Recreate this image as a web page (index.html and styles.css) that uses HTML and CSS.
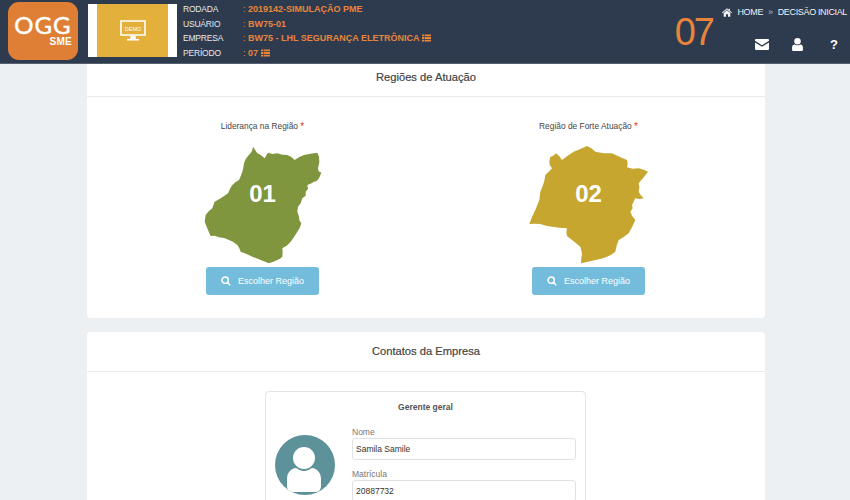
FILE: index.html
```html
<!DOCTYPE html>
<html lang="pt">

<head>
    <meta charset="UTF-8">
    <meta name="viewport" content="width=device-width, initial-scale=1.0">
    <title>Regiões de Atuação</title>
    <link rel="stylesheet" href="styles.css">
</head>

<body>
    <header class="topbar">
        <div class="logo">
            <span class="logo-name">OGG</span>
            <span class="logo-sub">SME</span>
        </div>
        <div class="demo">
            <div class="demo-inner">
                <svg class="demo-icon" viewBox="0 0 26 21">
                    <path d="M1 1h24v14H1z" fill="none" stroke="#fff" stroke-width="1.600"/>
                    <path d="M10.500 16h5l.5 3h-6zM7 19h12v1.500H7z" fill="#fff"/>
                    <text x="13" y="10.500" class="demo-text">DEMO</text>
                </svg>
            </div>
        </div>
        <dl class="info">
            <dt>RODADA</dt>
            <dd>: <b>2019142-SIMULAÇÃO PME</b></dd>
            <dt>USUÁRIO</dt>
            <dd>: <b>BW75-01</b></dd>
            <dt>EMPRESA</dt>
            <dd>: <b>BW75 - LHL SEGURANÇA ELETRÔNICA</b>
                <svg class="list-icon" viewBox="0 0 10 8"><path d="M0 0h2.400v2H0zM3 0h7v2H3zM0 3h2.400v2H0zM3 3h7v2H3zM0 6h2.400v2H0zM3 6h7v2H3z"/></svg>
            </dd>
            <dt>PERÍODO</dt>
            <dd>: <b>07</b>
                <svg class="list-icon" viewBox="0 0 10 8"><path d="M0 0h2.400v2H0zM3 0h7v2H3zM0 3h2.400v2H0zM3 3h7v2H3zM0 6h2.400v2H0zM3 6h7v2H3z"/></svg>
            </dd>
        </dl>
        <div class="period">07</div>
        <div class="top-right">
            <div class="crumbs">
                <svg class="home-icon" viewBox="0 0 12 10"><path d="M6 0l2 1.700V.6h1.500v2.400L12 5.100l-.6.7L6 1.300.6 5.800 0 5.100zM6 2.300l4 3.300V10H7.200V7H4.800v3H2V5.600z"/></svg>
                <span>HOME</span>
                <span class="crumb-sep">»</span>
                <span>DECISÃO INICIAL</span>
            </div>
            <div class="actions">
                <svg class="mail-icon" viewBox="0 0 14 11"><path d="M1 0h12a1 1 0 0 1 1 1v.8L7 6.300 0 1.800V1a1 1 0 0 1 1-1zM0 3.400l7 4.400 7-4.400V10a1 1 0 0 1-1 1H1a1 1 0 0 1-1-1z"/></svg>
                <svg class="user-icon" viewBox="0 0 10 12"><circle cx="5" cy="3" r="3"/><path d="M0 11V8.500C0 7 1.200 6 2.500 6c.7.500 1.500.8 2.500.8S6.800 6.500 7.500 6C8.800 6 10 7 10 8.500V11a1 1 0 0 1-1 1H1a1 1 0 0 1-1-1z"/></svg>
                <span class="help">?</span>
            </div>
        </div>
    </header>

    <main class="content">
        <section class="card card-regions">
            <h2 class="card-title title-regions">Regiões de Atuação</h2>
            <div class="regions">
                <div class="region">
                    <div class="field-label">Liderança na Região <span class="req">*</span></div>
                    <div class="map">
                        <svg viewBox="-8 0 450 360">
                            <polygon fill="#7f963f" points="187,5 184,17 180,24 170,35 164,44 160,55 158,68 155,80 150,94 145,105 134,112 125,120 118,131 112,145 100,153 90,160 72,170 68,181 65,190 54,199 45,210 42,230 47,243 52,255 60,273 72,272 85,277 100,279 115,285 128,291 140,300 146,310 150,320 166,326 185,335 210,345 235,355 248,350 260,345 268,341 275,335 276,322 275,310 288,302 300,290 310,276 320,260 327,249 332,235 326,226 325,215 320,200 322,185 330,175 335,160 345,152 345,140 352,132 350,120 360,116 370,110 378,108 385,100 392,83 384,79 382,70 386,52 385,35 380,23 360,26 340,30 326,36 312,45 302,36 290,30 275,29 260,25 245,27 232,23 226,32 222,40 210,30 200,25"/>
                        </svg>
                        <span class="map-num">01</span>
                    </div>
                    <button class="btn-region">
                        <svg class="search-icon" viewBox="0 0 12 12"><circle cx="5" cy="5" r="3.800"/><path d="M7.800 7.800L11 11"/></svg>
                        Escolher Região
                    </button>
                </div>
                <div class="region">
                    <div class="field-label">Região de Forte Atuação <span class="req">*</span></div>
                    <div class="map">
                        <svg viewBox="-4 0 450 360">
                            <polygon fill="#c6a62f" points="105,35 102,48 103,60 110,70 100,80 90,90 88,103 85,115 80,128 75,140 72,165 66,180 60,195 50,216 42,237 58,236 75,237 92,242 110,245 132,248 155,250 153,262 155,273 175,289 195,305 200,325 198,340 197,355 218,350 240,345 258,341 275,335 288,329 300,320 304,302 310,285 325,276 340,265 350,247 360,225 350,212 345,200 352,190 350,180 360,160 372,162 385,160 376,150 370,140 372,126 370,115 384,98 398,80 385,74 370,70 352,71 335,67 337,55 335,45 312,35 290,25 265,25 240,20 228,10 215,3 195,12 175,20 157,32 140,45 132,34 122,25 113,33"/>
                        </svg>
                        <span class="map-num">02</span>
                    </div>
                    <button class="btn-region">
                        <svg class="search-icon" viewBox="0 0 12 12"><circle cx="5" cy="5" r="3.800"/><path d="M7.800 7.800L11 11"/></svg>
                        Escolher Região
                    </button>
                </div>
            </div>
        </section>

        <section class="card">
            <h2 class="card-title title-contacts">Contatos da Empresa</h2>
            <div class="contact-wrap">
                <div class="contact">
                    <h3 class="contact-title">Gerente geral</h3>
                    <div class="contact-body">
                        <div class="avatar">
                            <svg viewBox="0 0 60 60">
                                <circle cx="29" cy="23" r="11" fill="#fff"/>
                                <path d="M12 51V44C12 37 17 33 21 33C24 35 26 36 29 36S34 35 37 33C41 33 46 37 46 44V51C46 54 44 57 41 57H17C14 57 12 54 12 51Z" fill="#fff"/>
                            </svg>
                        </div>
                        <div class="fields">
                            <label class="input-label">Nome</label>
                            <input class="input" value="Samila Samile">
                            <label class="input-label">Matrícula</label>
                            <input class="input" value="20887732">
                        </div>
                    </div>
                </div>
            </div>
        </section>
    </main>
</body>

</html>
```

FILE: styles.css
```css
* {
    margin: 0;
    padding: 0;
    box-sizing: border-box;
    font-family: 'Liberation Sans', Arial, sans-serif;
}

html, body {
    height: 500px;
    overflow: hidden;
}

body {
    background-color: #ecf0f3;
    color: #444;
}

/* top bar */
.topbar {
    display: flex;
    height: 64px;
    background-color: #2e3b4e;
    border-bottom: 1px solid #56606f;
    color: #fff;
}

.logo {
    width: 70px;
    height: 58px;
    margin: 2px 0 0 8px;
    background-color: #de7f35;
    border-radius: 11px;
    display: flex;
    flex-direction: column;
    align-items: flex-end;
    padding: 13px 6px 0 0;
    color: #fff;
}

.logo-name {
    font-family: 'Lato', sans-serif;
    font-size: 24px;
    line-height: 20px;
    letter-spacing: 1px;
    -webkit-text-stroke: 0.5px #fff;
    width: 100%;
    text-align: center;
    padding-left: 6px;
}

.logo-sub {
    font-size: 10px;
    font-weight: 700;
    line-height: 11px;
    letter-spacing: 0.3px;
    margin-top: 1px;
}

.demo {
    width: 89px;
    height: 53px;
    margin: 4px 0 0 10px;
    background-color: #fff;
    padding: 0 9px;
}

.demo-inner {
    height: 100%;
    background-color: #e2b03b;
    display: flex;
    align-items: center;
    justify-content: center;
}

.demo-icon {
    width: 26px;
    height: 21px;
}

.demo-text {
    font-size: 5.500px;
    fill: #fff;
    text-anchor: middle;
}

.info {
    display: grid;
    grid-template-columns: 60px auto;
    grid-auto-rows: 14.700px;
    margin: 2px 0 0 6px;
    font-size: 9px;
    line-height: 15px;
    align-self: flex-start;
}

.info dt {
    color: #e6e8ea;
    font-size: 8.500px;
    letter-spacing: -0.2px;
}

.info dd {
    color: #e8853a;
}

.list-icon {
    width: 9px;
    height: 8px;
    vertical-align: -1px;
    fill: #e8853a;
}

.period {
    margin-left: auto;
    margin-top: 9px;
    color: #e8853a;
    font-size: 38px;
    line-height: 46px;
    letter-spacing: -2px;
}

.top-right {
    width: 137px;
    display: flex;
    flex-direction: column;
    align-items: flex-end;
    padding-right: 3px;
}

.crumbs {
    display: flex;
    align-items: center;
    gap: 5px;
    margin-top: 6px;
    font-size: 9px;
    line-height: 12px;
    white-space: nowrap;
    letter-spacing: -0.35px;
    color: #eef0f2;
}

.home-icon {
    width: 10px;
    height: 9px;
    fill: #eef0f2;
}

.crumb-sep {
    color: #b8bec6;
}

.actions {
    display: flex;
    align-items: center;
    margin-top: 20px;
    padding-right: 9px;
}

.mail-icon {
    width: 14px;
    height: 11px;
    fill: #fff;
}

.user-icon {
    width: 11px;
    height: 13px;
    fill: #fff;
    margin-left: 23px;
}

.help {
    margin-left: 27px;
    font-size: 13px;
    font-weight: 700;
    line-height: 13px;
}

/* cards */
.content {
    width: 678px;
    margin: 0 auto;
    padding-left: 1px;
    display: flex;
    flex-direction: column;
    gap: 14px;
}

.card {
    width: 678px;
    background-color: #fff;
    border-radius: 4px;
}

.card-regions {
    height: 254px;
    border-radius: 0 0 4px 4px;
}

.card-title {
    text-align: center;
    font-weight: 400;
    font-size: 11.200px;
    -webkit-text-stroke: 0.2px #444;
    border-bottom: 1px solid #e8eaec;
}

.title-regions {
    height: 33px;
    line-height: 26px;
}

.title-contacts {
    height: 40px;
    line-height: 39px;
}

.regions {
    display: grid;
    grid-template-columns: 326px 326px;
    padding: 23px 12.500px 0;
}

.region {
    display: flex;
    flex-direction: column;
    align-items: center;
}

.field-label {
    font-size: 8.400px;
    line-height: 12px;
    color: #444;
}

.req {
    color: #e8332a;
    font-size: 10px;
    line-height: 10px;
    vertical-align: -1px;
}

.map {
    position: relative;
    width: 150px;
    height: 120px;
    margin-top: 13px;
}

.map svg {
    display: block;
    width: 150px;
    height: 120px;
}

.map-num {
    position: absolute;
    top: 35px;
    left: 0;
    width: 100%;
    text-align: center;
    color: #fff;
    font-size: 24px;
    font-weight: 700;
    line-height: 28px;
}

.btn-region {
    display: flex;
    align-items: center;
    justify-content: center;
    gap: 7px;
    width: 113px;
    height: 28px;
    margin-top: 2px;
    background-color: #74bcdb;
    border: none;
    border-radius: 3px;
    color: #fff;
    font-size: 9px;
}

.search-icon {
    width: 10px;
    height: 10px;
    fill: none;
    stroke: #fff;
    stroke-width: 1.800;
}

.contact-wrap {
    padding: 19px 0 0 178px;
}

.contact {
    width: 321px;
    height: 200px;
    border: 1px solid #e2e4e6;
    border-radius: 4px;
}

.contact-title {
    text-align: center;
    font-size: 8.500px;
    line-height: 12px;
    padding-top: 9px;
    color: #555;
}

.contact-body {
    display: flex;
    padding: 13px 9px 0 9px;
}

.avatar {
    width: 60px;
    height: 60px;
    margin-top: 9px;
    background-color: #5d929b;
    border-radius: 50%;
    overflow: hidden;
}

.avatar svg {
    display: block;
}

.fields {
    flex: 1;
    margin-left: 17px;
}

.input-label {
    display: block;
    font-size: 8.500px;
    line-height: 12px;
    color: #777;
}

.input {
    display: block;
    width: 100%;
    height: 22px;
    margin-bottom: 8px;
    padding: 0 3px;
    border: 1px solid #dfe2e5;
    border-radius: 3px;
    font-size: 8.500px;
    color: #333;
}
```
